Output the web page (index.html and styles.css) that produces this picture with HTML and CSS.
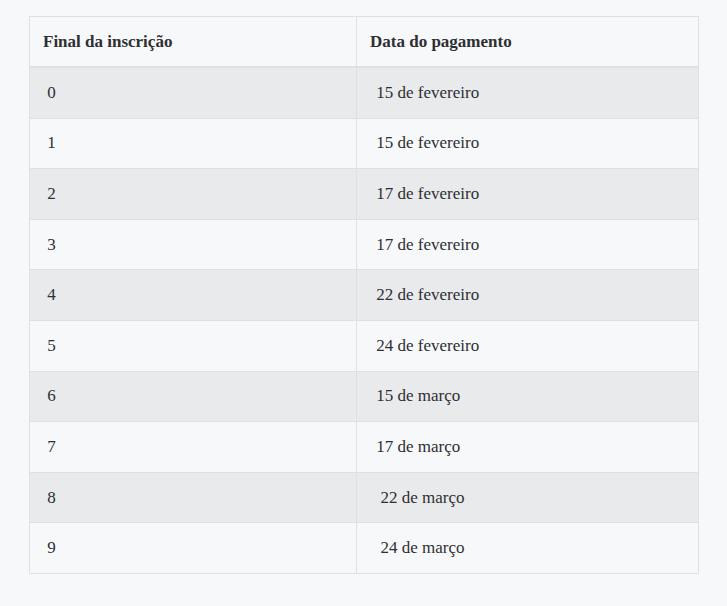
FILE: index.html
```html
<!DOCTYPE html>
<html lang="pt">
<head>
<meta charset="utf-8">
<link rel="stylesheet" href="styles.css">
</head>
<body>
<div class="wrap">
<table class="tbl">
<thead>
<tr><th class="c1">Final da inscrição</th><th class="c2">Data do pagamento</th></tr>
</thead>
<tbody>
<tr class="odd"><td>&nbsp;0</td><td class="d">&nbsp;15 de fevereiro</td></tr>
<tr><td>&nbsp;1</td><td class="d">&nbsp;15 de fevereiro</td></tr>
<tr class="odd"><td>&nbsp;2</td><td class="d">&nbsp;17 de fevereiro</td></tr>
<tr><td>&nbsp;3</td><td class="d">&nbsp;17 de fevereiro</td></tr>
<tr class="odd"><td>&nbsp;4</td><td class="d">&nbsp;22 de fevereiro</td></tr>
<tr><td>&nbsp;5</td><td class="d">&nbsp;24 de fevereiro</td></tr>
<tr class="odd"><td>&nbsp;6</td><td class="d">&nbsp;15 de março</td></tr>
<tr><td>&nbsp;7</td><td class="d">&nbsp;17 de março</td></tr>
<tr class="odd"><td>&nbsp;8</td><td class="d">&nbsp;&nbsp;22 de março</td></tr>
<tr><td>&nbsp;9</td><td class="d">&nbsp;&nbsp;24 de março</td></tr>
</tbody>
</table>
</div>
</body>
</html>
```
FILE: styles.css
```css
html, body {
  margin: 0;
  padding: 0;
  background: #f7f8fa;
}
.wrap {
  padding: 16px 28px 0 29px;
}
.tbl {
  width: 670px;
  border-collapse: collapse;
  font-family: "Liberation Serif", serif;
  font-size: 17px;
  color: #2e2f33;
}
.tbl th, .tbl td {
  border: 1px solid #dfe0e4;
  padding: 0 0 0 13px;
  text-align: left;
  height: 49.6px;
  line-height: 24px;
}
.tbl td.d {
  padding-left: 15px;
}
.tbl th {
  font-weight: bold;
  height: 49px;
  border-bottom: 2px solid #dfe0e4;
}
.tbl .c1 {
  width: 313px;
}
.tbl tr.odd td {
  background: #e9eaec;
}
```
